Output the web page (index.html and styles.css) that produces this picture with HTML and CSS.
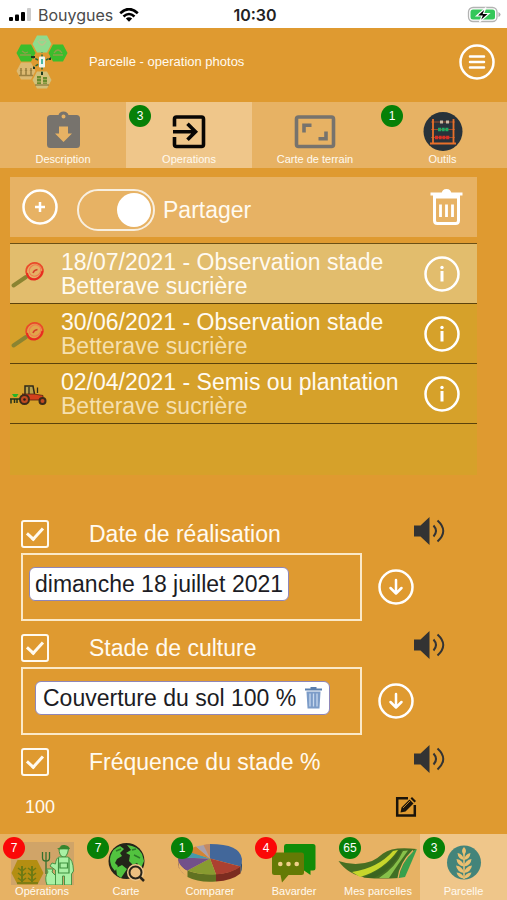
FILE: index.html
```html
<!DOCTYPE html>
<html lang="fr">
<head>
<meta charset="utf-8">
<meta name="viewport" content="width=device-width, initial-scale=1">
<title>Parcelle - operation photos</title>
<link rel="stylesheet" href="styles.css">
</head>
<body>
<svg class="defs" aria-hidden="true">
  <defs>
    <symbol id="hex" viewBox="0 0 20 18"><path d="M5 .5H15L19.500 9 15 17.500H5L.5 9Z"/></symbol>
    <symbol id="loupe" viewBox="0 0 40 30">
      <path d="M3.500 26.500 16 18" stroke="#8b8431" stroke-width="4" stroke-linecap="round" fill="none"/>
      <ellipse cx="24.500" cy="12" rx="8.500" ry="8" transform="rotate(-30 24.500 12)" fill="#e8a860" fill-opacity=".6" stroke="#ea4a2a" stroke-width="1.800"/>
      <ellipse cx="25" cy="11.500" rx="6" ry="5.500" transform="rotate(-30 25 11.500)" fill="none" stroke="#f07a50" stroke-width="1"/>
      <path d="M17 14Q18 21 25 20.500Q31 19 32.500 12" fill="none" stroke="#e82c20" stroke-width="2"/>
      <path d="M23 14Q24 11 27.500 10.500" fill="none" stroke="#d5402a" stroke-width="1.500"/>
    </symbol>
    <symbol id="info" viewBox="0 0 36 36">
      <circle cx="18" cy="18" r="16.500" fill="none" stroke="#fff" stroke-width="2.500"/>
      <path d="M18 15V25.500" stroke="#fff" stroke-width="3"/>
      <circle cx="18" cy="11.500" r="1.700" fill="#fff"/>
    </symbol>
    <symbol id="down" viewBox="0 0 36 36">
      <circle cx="18" cy="18" r="16.500" fill="none" stroke="#fff" stroke-width="2.500"/>
      <path d="M18 11V24M12.500 19 18 24.500 23.500 19" fill="none" stroke="#fff" stroke-width="2.500" stroke-linecap="round" stroke-linejoin="round"/>
    </symbol>
    <symbol id="speaker" viewBox="0 0 31 28">
      <path d="M0 8.500H6.500L15.500 0V28L6.500 19.500H0Z" fill="#333"/>
      <path d="M19.500 8.500Q24.500 14 19.500 19.500M23.500 3.500Q35 14 23.500 24.500" fill="none" stroke="#333" stroke-width="2"/>
    </symbol>
  </defs>
</svg>

<div class="status">
  <div class="carrier">
    <svg width="23" height="14" viewBox="0 0 23 14" aria-hidden="true">
      <rect x="0" y="9" width="4" height="4" rx="1" fill="#000"/>
      <rect x="6" y="6.500" width="4" height="6.500" rx="1" fill="#000"/>
      <rect x="12" y="4" width="4" height="9" rx="1" fill="#000"/>
      <rect x="18" y="0" width="4" height="13" rx="1" fill="#ccc"/>
    </svg>
    <span>Bouygues</span>
    <svg width="20" height="14" viewBox="0 0 20 14" aria-hidden="true">
      <path d="M1.200 5.200Q10-3 18.800 5.200M4.500 8.500Q10 3.500 15.500 8.500" fill="none" stroke="#000" stroke-width="2.600"/>
      <path d="M6.800 10.500Q10 7.800 13.200 10.500L10 13.800Z" fill="#000"/>
    </svg>
  </div>
  <time>10:30</time>
  <svg class="battery" width="34" height="18" viewBox="0 0 34 18" aria-hidden="true">
    <rect x="1.500" y="1.500" width="28.500" height="14" rx="4.500" fill="#fff" stroke="#b3b3b3" stroke-width="1.300"/>
    <rect x="3.500" y="3.500" width="24.500" height="10" rx="2.500" fill="#35c759"/>
    <path d="M31.500 6V11Q33.500 10 33.500 8.500T31.500 6Z" fill="#aaa"/>
    <path d="M19 1.500 9.500 10H15L12.500 16 22 7.500H16.500Z" fill="#000" stroke="#fff" stroke-width="1.200"/>
  </svg>
</div>

<header class="header">
  <svg class="logo" width="52" height="54" viewBox="0 0 52 54" role="img" aria-label="Logo">
    <path d="M26 27V16M26 27 16 22M26 27 36 22M26 27 16 33M26 27V38" stroke="#2c6a35" stroke-width="1.500" stroke-dasharray="3 1.500"/>
    <use href="#hex" x="16" y="0" width="20" height="18" fill="#8fdc8d"/>
    <use href="#hex" x="0" y="9" width="20" height="18" fill="#3bbd2c"/>
    <use href="#hex" x="32" y="9" width="20" height="18" fill="#3bbd2c"/>
    <use href="#hex" x="0" y="27" width="20" height="18" fill="#dcb971"/>
    <use href="#hex" x="16" y="36" width="20" height="18" fill="#d3c07a"/>
    <path d="M22 6Q26 14 30 6M23 5H29" fill="none" stroke="#b9c48a" stroke-width="1.500"/>
    <path d="M4 20H15M6 16 9 18 12 17M37 20H47M38 18Q42 12 46 18" fill="none" stroke="#8fa04a" stroke-width="1.300"/>
    <path d="M5 33V40M10 33V40M15 33V40M4 35 6 36M9 35 11 36M14 35 16 36M3 40.500H17" stroke="#9c8140" stroke-width="1.600"/>
    <path d="M23 41V49M29 42V49" stroke="#6a8b2c" stroke-width="4" stroke-dasharray="2.500 .6"/>
    <path d="M19 50H33" stroke="#7a6a30"/>
    <rect x="23" y="21.500" width="6" height="11" rx="1" fill="#eef6f0"/>
    <path d="M26 24V29" stroke="#4db7a0" stroke-width="2"/>
    <path d="M15 22H19M33 24H35M17 33H19M26 37V40" stroke="#1e3a20" stroke-width="2"/>
  </svg>
  <h1>Parcelle - operation photos</h1>
  <button class="icon-button" type="button" aria-label="Menu">
    <svg width="36" height="36" viewBox="0 0 36 36"><circle cx="18" cy="18" r="16.500" fill="none" stroke="#fff" stroke-width="2.500"/><path d="M11 12.500H25M11 18H25M11 23.500H25" stroke="#fff" stroke-width="2.500" stroke-linecap="round"/></svg>
  </button>
</header>

<nav class="bar tabs" aria-label="Parcelle">
  <a href="#description">
    <svg width="84" height="44" viewBox="0 0 84 44" aria-hidden="true">
      <path fill="#77736d" fill-rule="evenodd" d="M29.500 6H37.500Q38.500 2.500 42.500 2.500T47.500 6H55.500Q59 6 59 9.500V35.500Q59 39 55.500 39H29.500Q26 39 26 35.500V9.500Q26 6 29.500 6ZM42.500 5.500A2 2 0 1 0 42.500 9.500 2 2 0 1 0 42.500 5.500ZM38 17.500V24.500H34L42.500 33 51 24.500H47V17.500Z"/>
    </svg>
    <span>Description</span>
  </a>
  <a class="active" href="#operations" aria-current="page">
    <b class="badge green">3</b>
    <svg width="84" height="44" viewBox="0 0 84 44" aria-hidden="true">
      <path d="M27.500 17.500V10Q27.500 8 29.500 8H54.500Q56.500 8 56.500 10V35.500Q56.500 37.500 54.500 37.500H29.500Q27.500 37.500 27.500 35.500V28M26 22.700H48M40.500 14.700 48.500 22.700 40.500 30.700" fill="none" stroke="#080604" stroke-width="3.600"/>
    </svg>
    <span>Operations</span>
  </a>
  <a href="#carte-terrain">
    <svg width="84" height="44" viewBox="0 0 84 44" aria-hidden="true">
      <rect x="23.500" y="8" width="37" height="29.500" rx="2" fill="none" stroke="#77736d" stroke-width="3.600"/>
      <path d="M31 23.500V16.200H38.500M53 22.500V29.800H45.500" fill="none" stroke="#77736d" stroke-width="3.600"/>
    </svg>
    <span>Carte de terrain</span>
  </a>
  <a href="#outils">
    <b class="badge green">1</b>
    <svg width="84" height="44" viewBox="0 0 84 44" aria-hidden="true">
      <circle cx="42" cy="22.500" r="19.500" fill="#28323a"/>
      <path d="M30 13H54M30 20.500H54M30 28.500H54" stroke="#9a4a2c"/>
      <path d="M32 10V35M52.500 10V35M29 34.500H55" stroke="#e8702a" stroke-width="1.800"/>
      <path d="M39 13H42M45 13H48" stroke="#c9b8a4" stroke-width="3"/>
      <path d="M37 20.500H48" stroke="#1faa62" stroke-width="3.500" stroke-dasharray="3 .7"/>
      <path d="M34 28.500H49" stroke="#d62f26" stroke-width="3.500" stroke-dasharray="3 .7"/>
    </svg>
    <span>Outils</span>
  </a>
</nav>

<main>
  <section class="operations" aria-label="Operations">
    <div class="toolbar">
      <button class="icon-button" type="button" aria-label="Ajouter">
        <svg width="36" height="36" viewBox="0 0 36 36"><circle cx="18" cy="18" r="16.500" fill="none" stroke="#fff" stroke-width="2.500"/><path d="M18 13V23M13 18H23" stroke="#fff" stroke-width="2.500"/></svg>
      </button>
      <label class="share"><input class="switch" type="checkbox" role="switch" checked><span>Partager</span></label>
      <button class="icon-button" type="button" aria-label="Supprimer">
        <svg width="33" height="36" viewBox="0 0 33 36"><path d="M.5 5H32.500M4.500 8V31.500Q4.500 34.500 7.500 34.500H25.500Q28.500 34.500 28.500 31.500V8Z" fill="none" stroke="#fff" stroke-width="3"/><path d="M11.500 5Q12 0 16.500 0T21.500 5Z" fill="#fff"/><path d="M10.500 15.500V28M16.500 15.500V28M22.500 15.500V28" stroke="#fff" stroke-width="2.800"/></svg>
      </button>
    </div>
    <ul class="list">
      <li class="selected">
        <svg width="40" height="30" aria-hidden="true"><use href="#loupe"/></svg>
        <p>18/07/2021 - Observation stade<small>Betterave sucrière</small></p>
        <button class="icon-button" type="button" aria-label="Informations"><svg width="36" height="36"><use href="#info"/></svg></button>
      </li>
      <li>
        <svg width="40" height="30" aria-hidden="true"><use href="#loupe"/></svg>
        <p>30/06/2021 - Observation stade<small>Betterave sucrière</small></p>
        <button class="icon-button" type="button" aria-label="Informations"><svg width="36" height="36"><use href="#info"/></svg></button>
      </li>
      <li>
        <svg width="40" height="30" viewBox="0 0 40 30" aria-hidden="true">
          <path d="M15 15V7H23L24.500 15" fill="#b9a24a" stroke="#2f2a1a" stroke-width="1.500"/>
          <path d="M19 8V15M27.500 14V8.500" stroke="#2f2a1a" stroke-width="1.300"/>
          <path d="M12 15H24L33 16.500V21H20Z" fill="#d3401c" stroke="#5a2310" stroke-width=".8"/>
          <circle cx="14.500" cy="20.500" r="4.500" fill="#c04a20" stroke="#3e2b1a" stroke-width="2"/><circle cx="14.500" cy="20.500" r="1.300" fill="#2e2013"/>
          <circle cx="32.500" cy="22" r="3" fill="#c04a20" stroke="#3e2b1a" stroke-width="2"/>
          <path d="M2 15H8.500L6.500 18H4Z" fill="#23b526"/>
          <path d="M0 20H10M1 20V24.500M4.500 20V24M7 20V24" stroke="#26331a" stroke-width="1.500"/>
        </svg>
        <p>02/04/2021 - Semis ou plantation<small>Betterave sucrière</small></p>
        <button class="icon-button" type="button" aria-label="Informations"><svg width="36" height="36"><use href="#info"/></svg></button>
      </li>
    </ul>
  </section>

  <form class="form">
    <div class="field-head">
      <input class="check" type="checkbox" id="date" checked>
      <label for="date">Date de réalisation</label>
      <button class="icon-button" type="button" aria-label="Écouter"><svg width="31" height="28"><use href="#speaker"/></svg></button>
    </div>
    <div class="field-body">
      <div class="value-box"><span class="chip">dimanche 18 juillet 2021</span></div>
      <button class="icon-button" type="button" aria-label="Choisir la date"><svg width="36" height="36"><use href="#down"/></svg></button>
    </div>

    <div class="field-head">
      <input class="check" type="checkbox" id="stade" checked>
      <label for="stade">Stade de culture</label>
      <button class="icon-button" type="button" aria-label="Écouter"><svg width="31" height="28"><use href="#speaker"/></svg></button>
    </div>
    <div class="field-body">
      <div class="value-box tags">
        <span class="chip">Couverture du sol 100 %
          <button class="icon-button" type="button" aria-label="Retirer">
            <svg width="17" height="22" viewBox="0 0 17 22"><path d="M0 2.500H17M5.500 1H11.500" stroke="#5b7fae" stroke-width="1.800"/><path d="M1.500 4.500H15.500L14.500 21.500H2.500Z" fill="#7c9cc8"/><path d="M5 6.500V19.500M8.500 6.500V19.500M12 6.500V19.500" stroke="#c6d8ee" stroke-width="1.300"/></svg>
          </button>
        </span>
      </div>
      <button class="icon-button" type="button" aria-label="Choisir le stade"><svg width="36" height="36"><use href="#down"/></svg></button>
    </div>

    <div class="field-head">
      <input class="check" type="checkbox" id="frequence" checked>
      <label for="frequence">Fréquence du stade %</label>
      <button class="icon-button" type="button" aria-label="Écouter"><svg width="31" height="28"><use href="#speaker"/></svg></button>
    </div>
    <div class="amount">
      <input type="text" inputmode="numeric" value="100" aria-label="Fréquence du stade en pourcentage">
      <button class="icon-button" type="button" aria-label="Modifier">
        <svg width="22" height="22" viewBox="0 0 22 22"><path d="M13 2.200H2.200V19.500H19.800V9" fill="none" stroke="#1b140a" stroke-width="2.500"/><path d="M5.500 16.500 6.500 11.500 14.500 3.500 18.500 7.500 10.500 15.500ZM15.500 2.500 17 1 21 5 19.500 6.500Z" fill="#1b140a"/><path d="M8 12 15 5" stroke="#df9a30" stroke-width=".8"/></svg>
      </button>
    </div>
  </form>
</main>

<nav class="bar bottom" aria-label="Navigation principale">
  <a href="#operations-all">
    <b class="badge red">7</b>
    <svg width="84" height="44" viewBox="0 0 84 44" aria-hidden="true">
      <rect x="11" y="1" width="63" height="43" fill="#d0a468"/>
      <path d="M11.500 32 17.500 19H37L43.500 32 37.500 43.500H17.500Z" fill="#b48e12"/>
      <path d="M22 25V41M32 25V41" stroke="#6f7a14" stroke-width="2"/>
      <path d="M18 27 22 30 26 27M18 32 22 35 26 32M18 37 22 40 26 37M28 27 32 30 36 27M28 32 32 35 36 32M28 37 32 40 36 37M17 42H38" fill="none" stroke="#6f7a14" stroke-width="1.500"/>
      <path d="M42.500 11V17Q42.500 20 46 20T49.500 17V11M46 11V33" fill="none" stroke="#34702e" stroke-width="1.300"/>
      <path d="M47 44Q44 36 48 31L46.500 28H53L52 31 56 35V44Z" fill="#a9f0a4" stroke="#3e8f3e" stroke-width=".9"/>
      <path d="M59 7Q59 15 63 16T68.500 8Z" fill="#a9f0a4" stroke="#3e8f3e"/>
      <path d="M57 7.500 60 7Q60 3.500 64.500 4T70 8L59 8.500Z" fill="#37862f"/>
      <path d="M59 16H68Q73 18 73.500 30L71.500 33V44H64.500V35H62.500V44H55.500V29L50 25 52 22 55.500 23Q56 17 59 16Z" fill="#a9f0a4" stroke="#3e8f3e" stroke-width=".9"/>
      <path d="M58.500 17V32H69V17M60 22H67.500V27H60Z" fill="none" stroke="#3e8f3e" stroke-width="1.200"/>
    </svg>
    <span>Opérations</span>
  </a>
  <a href="#carte">
    <b class="badge green">7</b>
    <svg width="84" height="44" viewBox="0 0 84 44" aria-hidden="true">
      <circle cx="42.500" cy="20" r="18" fill="#232519"/>
      <path d="M26.500 15Q29 7 36 5L40 8 36 12 38 15 33 18 31 22 34 25 31 30Q26 25 26 18ZM43 4Q54 5 58 13L60 20 57 27 53 22 49 24 45 20 46 14 42 12 47 9ZM32 27 38 24 43 28 39 34 37 37 33 34Z" fill="#52c33f"/>
      <path d="M32 10 37 8M50 14 56 17M48 9 52 8" stroke="#2d7a28" stroke-width="1.500"/>
      <circle cx="51.500" cy="31.500" r="6.500" fill="#e7b264" stroke="#f0c88c" stroke-width="4"/>
      <circle cx="51.500" cy="31.500" r="6" fill="#edc081" stroke="#29241a" stroke-width="2"/>
      <path d="M55.500 35.500 60 40" stroke="#29241a" stroke-width="2.500"/>
    </svg>
    <span>Carte</span>
  </a>
  <a href="#comparer">
    <b class="badge green">1</b>
    <svg width="84" height="44" viewBox="0 0 84 44" aria-hidden="true">
      <path d="M10 17.500V24Q11 30 20 36L20 30ZM10 17.500Q12 26 20 30V36Q12 31 10.500 25Z" fill="#4f3160"/>
      <path d="M19.500 29.500Q30 34 48 33V40.500Q31 42 19.500 36Z" fill="#607221"/>
      <path d="M48 33Q64 32 72.500 25V32.500Q64 39.500 48 40.500Z" fill="#7c2c20"/>
      <path d="M72.500 25Q74 22 74 18V25Q74 29 72.500 32.500Z" fill="#294a70"/>
      <path d="M42 17.500V3Q72 3 74 18 74 22 72.500 25.500Z" fill="#42679a"/>
      <path d="M42 17.500 72.500 25.500Q65 32 48 33.500Z" fill="#ac4030"/>
      <path d="M42 17.500 48 33.500Q31 34 19.500 29.500Z" fill="#889b30"/>
      <path d="M42 17.500 19.500 29.500Q10 25 10 16.500Z" fill="#72508a"/>
      <path d="M42 17.500 10 16.500Q11 12 19 9.500Z" fill="#4599ac"/>
      <path d="M42 17.500 18 10Q22 7 28 5.500Z" fill="#d38434"/>
      <path d="M42 17.500 28 5.500 36 4Z" fill="#a9a0ab"/>
      <path d="M42 17.500 35.500 4Q38 3 42 3Z" fill="#c38a64"/>
    </svg>
    <span>Comparer</span>
  </a>
  <a href="#bavarder">
    <b class="badge red">4</b>
    <svg width="84" height="44" viewBox="0 0 84 44" aria-hidden="true">
      <path d="M34 3H61Q63.500 3 63.500 5.500V27Q63.500 29.500 61 29.500H58.500V34L52 29.500H34Q32 29.500 32 27V5.500Q32 3 34 3Z" fill="#128c08"/>
      <path d="M22.500 11.500H49.500Q52 11.500 52 14V31.500Q52 34 49.500 34H36.500L30 41.500 28.500 34H22.500Q20 34 20 31.500V14Q20 11.500 22.500 11.500Z" fill="#647a05"/>
      <circle cx="28.300" cy="23" r="2.300" fill="#f0cf88"/><circle cx="36.500" cy="23" r="2.300" fill="#f0cf88"/><circle cx="44.700" cy="23" r="2.300" fill="#f0cf88"/>
    </svg>
    <span>Bavarder</span>
  </a>
  <a href="#mes-parcelles">
    <b class="badge green">65</b>
    <svg width="84" height="44" viewBox="0 0 84 44" aria-hidden="true">
      <path d="M2.500 20Q20 26 36 20 42 17 47 12.500 57 5 80.500 8 68 16 63.500 37 44 38 32 37 12 34 2.500 20Z" fill="#476f22"/>
      <path d="M16 31Q42 27 57 10L62 9Q48 29 24 36Z" fill="#c7d62b"/>
      <path d="M27 36.500Q53 26 63 9L66 9Q57 28 38 37Z" fill="#3b6420"/>
      <path d="M43 37Q60 26 67 10L72 9.500Q62 23 53 37Z" fill="#87c04a"/>
      <path d="M54 37Q64 22 73 9.500L77 9Q66 24 62.500 37Z" fill="#3f6f25"/>
      <path d="M63 37Q65 22 78 9.500L81 8Q76 20 69 36Z" fill="#38a04c"/>
      <path d="M62 37.500Q64 22 77 9.500" fill="none" stroke="#e7b264" stroke-width="1.200"/>
    </svg>
    <span>Mes parcelles</span>
  </a>
  <a class="active" href="#parcelle" aria-current="page">
    <b class="badge green">3</b>
    <svg width="84" height="44" viewBox="0 0 84 44" aria-hidden="true">
      <circle cx="42" cy="21.500" r="17" fill="#43847a"/>
      <path d="M42 10V38" stroke="#ecc071" stroke-width="1.500"/>
      <g fill="#ecc071">
        <path d="M42 6Q46 10 42 14 38 10 42 6Z"/>
        <path id="leaf" d="M42 19Q36 18 35.500 12 41 13 42 19ZM42 19Q48 18 48.500 12 43 13 42 19Z"/>
        <path d="M42 25.500Q35 24.500 34.500 18 41 19 42 25.500ZM42 25.500Q49 24.500 49.500 18 43 19 42 25.500Z"/>
        <path d="M42 32Q35 31 34 24.500 41 25.500 42 32ZM42 32Q49 31 50 24.500 43 25.500 42 32Z"/>
        <path d="M42 37.500Q36 37 34.500 31.500 41 32 42 37.500ZM42 37.500Q48 37 49.500 31.500 43 32 42 37.500Z"/>
      </g>
    </svg>
    <span>Parcelle</span>
  </a>
</nav>
</body>
</html>
```
FILE: styles.css
```css
* {
  box-sizing: border-box;
}

body {
  margin: 0;
  min-height: 100vh;
  display: flex;
  flex-direction: column;
  background: #df9a30;
  color: #fffaf0;
  font-family: "Liberation Sans", Arial, Helvetica, sans-serif;
  font-size: 23px;
  line-height: 24px;
}

svg {
  display: block;
  flex: none;
}

.defs {
  position: absolute;
  width: 0;
  height: 0;
}

.icon-button {
  flex: none;
  padding: 0;
  border: 0;
  background: none;
  cursor: pointer;
}

/* Status bar */
.status {
  display: grid;
  grid-template-columns: 1fr auto 1fr;
  align-items: center;
  height: 28px;
  padding: 2px 6px 0 9px;
  background: #fff;
  color: #222;
  font-family: Inter, "Liberation Sans", sans-serif;
  font-size: 16px;
}

.carrier {
  display: flex;
  align-items: center;
  gap: 6px;
  color: #4a4a4a;
}

.status time {
  font-weight: 600;
}

.battery {
  justify-self: end;
}

/* Header */
.header {
  display: flex;
  align-items: center;
  height: 74px;
  padding: 0 12px 6px 16px;
}

.header h1 {
  flex: 1;
  margin: 0 0 0 21px;
  font-size: 13px;
  font-weight: 400;
}

/* Icon bars */
.bar {
  display: grid;
  background: #e7b264;
}

.tabs {
  grid-template-columns: repeat(3, 42fr) 43fr;
}

.bottom {
  grid-template-columns: repeat(5, 84fr) 87fr;
  margin-top: auto;
}

.bar a {
  position: relative;
  display: flex;
  flex-direction: column;
  align-items: center;
  min-width: 0;
  padding: 7px 0 3px;
  color: #fffaf0;
  font-size: 11px;
  line-height: 12px;
  text-decoration: none;
  white-space: nowrap;
}

.bar .active {
  background: #efc68a;
}

.badge {
  position: absolute;
  top: 3px;
  left: 3px;
  width: 22px;
  height: 22px;
  border-radius: 50%;
  color: #fff;
  font-size: 12px;
  font-weight: 400;
  line-height: 22px;
  text-align: center;
}

.green {
  background: #078007;
}

.red {
  background: #fb0707;
}

/* Operations list */
.operations {
  margin: 9px 30px 0 10px;
}

.toolbar {
  display: flex;
  align-items: center;
  gap: 19px;
  height: 60px;
  padding: 0 14px 0 12px;
  background: #e7b264;
}

.share {
  flex: 1;
  display: flex;
  align-items: center;
  gap: 8px;
  padding-top: 6px;
}

.switch {
  appearance: none;
  display: flex;
  justify-content: flex-end;
  width: 78px;
  height: 42px;
  margin: 0;
  padding: 2px;
  border: 2px solid #f8efe0;
  border-radius: 21px;
}

.switch::before {
  content: "";
  width: 34px;
  height: 34px;
  border-radius: 50%;
  background: #fff;
}

.switch:not(:checked) {
  justify-content: flex-start;
}

.list {
  margin: 6px 0 0;
  padding: 0 0 51px;
  border-top: 1px solid #6b5015;
  background: #d6a12a;
  list-style: none;
}

.list li {
  display: flex;
  align-items: center;
  gap: 11px;
  height: 60px;
  padding-right: 17px;
  border-bottom: 1px solid #5b420c;
}

.list .selected {
  background: #e2bd6d;
}

.list p {
  flex: 1;
  margin: 0;
}

.list small {
  display: block;
  color: #f5dfae;
  font-size: 23px;
}

.list .selected small {
  color: #fffaf0;
}

/* Form */
.form {
  padding: 42px 62px 0 21px;
}

.field-head {
  display: flex;
  align-items: center;
  height: 33px;
}

.field-head label {
  flex: 1;
  margin-left: 40px;
}

.field-head .icon-button {
  align-self: flex-start;
}

.check {
  appearance: none;
  display: grid;
  place-items: center;
  width: 28px;
  height: 28px;
  margin: 0;
  border: 2px solid #fffaf0;
  border-radius: 3px;
}

.check:checked::before {
  content: "";
  width: 7px;
  height: 13px;
  margin-bottom: 4px;
  border: solid #fffaf0;
  border-width: 0 3px 3px 0;
  transform: rotate(42deg);
}

.field-body {
  display: flex;
  align-items: center;
  gap: 16px;
  margin: 3px 0 10px;
  padding-right: 31px;
}

.value-box {
  flex: 1;
  height: 68px;
  padding: 12px 6px;
  border: 2px solid #fbe9c8;
}

.value-box.tags {
  padding-left: 12px;
}

.chip {
  display: inline-flex;
  align-items: center;
  gap: 9px;
  height: 34px;
  padding: 0 5px;
  border: 1px solid #8f86b8;
  border-radius: 6px;
  background: #fff;
  color: #1c1c24;
  white-space: nowrap;
}

.tags .chip {
  padding: 0 7px;
}

.amount {
  display: flex;
  align-items: center;
  justify-content: space-between;
  height: 36px;
  margin: 11px 0 9px;
  padding: 0 28px 0 4px;
}

.amount input {
  flex: 1;
  min-width: 0;
  padding: 0;
  border: 0;
  background: none;
  color: #fffaf0;
  font: inherit;
  font-size: 18px;
}
```
